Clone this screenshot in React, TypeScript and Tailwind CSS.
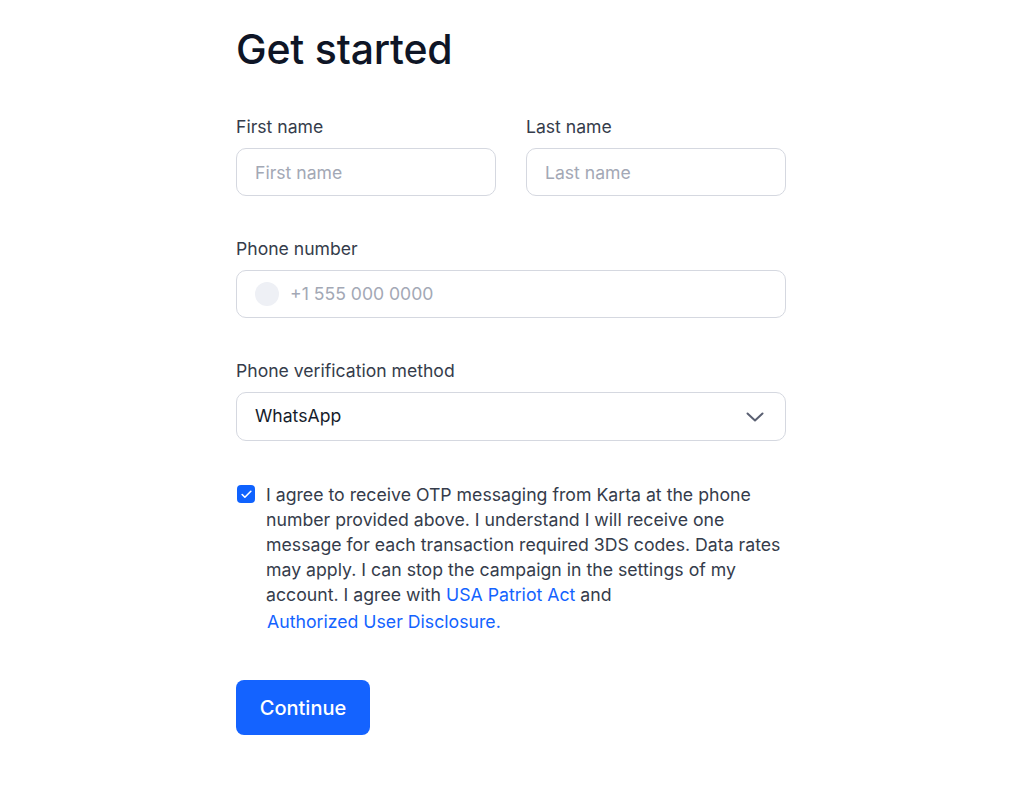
import { Check } from "lucide-react";

const inputCls =
    "h-12 w-full rounded-[10px] border border-[#d5d8e0] bg-white px-[18px] text-[17.6px] text-[#111827] placeholder:text-[#a3a8b5] outline-none";

const Label = ({ children }: { children: React.ReactNode }) => (
    <label className="block text-[17.6px] leading-6 text-[#353c4b] mb-[9px]">{children}</label>
);

const App = () => {
    return (
        <div className="min-h-screen bg-white" style={{ fontFamily: "Inter, 'Noto Sans', sans-serif" }}>
            <div className="w-[550px] ml-[236px] pt-[24px]">
                <h1 className="text-[41px] leading-[50px] font-medium text-[#0e1526] tracking-[-0.2px]">Get started</h1>

                <div className="mt-[41px] grid grid-cols-2 gap-[30px]">
                    <div>
                        <Label>First name</Label>
                        <input className={inputCls} placeholder="First name" />
                    </div>
                    <div>
                        <Label>Last name</Label>
                        <input className={inputCls} placeholder="Last name" />
                    </div>
                </div>

                <div className="mt-[41px]">
                    <Label>Phone number</Label>
                    <div className="flex h-12 items-center gap-[11px] rounded-[10px] border border-[#d5d8e0] px-[18px]">
                        <span className="h-6 w-6 shrink-0 rounded-full bg-[#eef0f5]" />
                        <input className="w-full text-[17.6px] text-[#111827] placeholder:text-[#a3a8b5] outline-none" placeholder="+1 555 000 0000" />
                    </div>
                </div>

                <div className="mt-[41px]">
                    <Label>Phone verification method</Label>
                    <button className="flex h-[49px] w-full items-center justify-between rounded-[10px] border border-[#d5d8e0] pl-[18px] pr-[21px] text-[17.6px] text-[#161c2b]">
                        <span>WhatsApp</span>
                        <svg width="18" height="10" viewBox="0 0 18 10" fill="none" stroke="#5a6072" strokeWidth="2" strokeLinecap="round" strokeLinejoin="round">
                            <path d="M1.5 1.5l7.5 7 7.5-7" />
                        </svg>
                    </button>
                </div>

                <div className="mt-[41px] flex gap-[11px]">
                    <span className="mt-[3px] ml-[1px] flex h-[18px] w-[18px] shrink-0 items-center justify-center rounded-[4px] bg-[#0f62fe]">
                        <Check className="h-[13px] w-[13px] text-white" strokeWidth={3} />
                    </span>
                    <p className="text-[17.7px] leading-[25px] text-[#353c4b] w-[520px]">
                        I agree to receive OTP messaging from Karta at the phone number provided above. I understand I will receive one message for each transaction required 3DS codes. Data rates may apply. I can stop the campaign in the settings of my account. I agree with{" "}
                        <a className="text-[#1363ff]">USA Patriot Act</a> and{" "}
                        <a className="mt-[2px] ml-[1px] inline-block text-[#1363ff]">Authorized User Disclosure.</a>
                    </p>
                </div>

                <button className="mt-[46px] h-[55px] w-[134px] rounded-[8px] bg-[#1463ff] text-[20px] font-medium text-white">
                    Continue
                </button>
            </div>
        </div>
    );
};

export default App;
